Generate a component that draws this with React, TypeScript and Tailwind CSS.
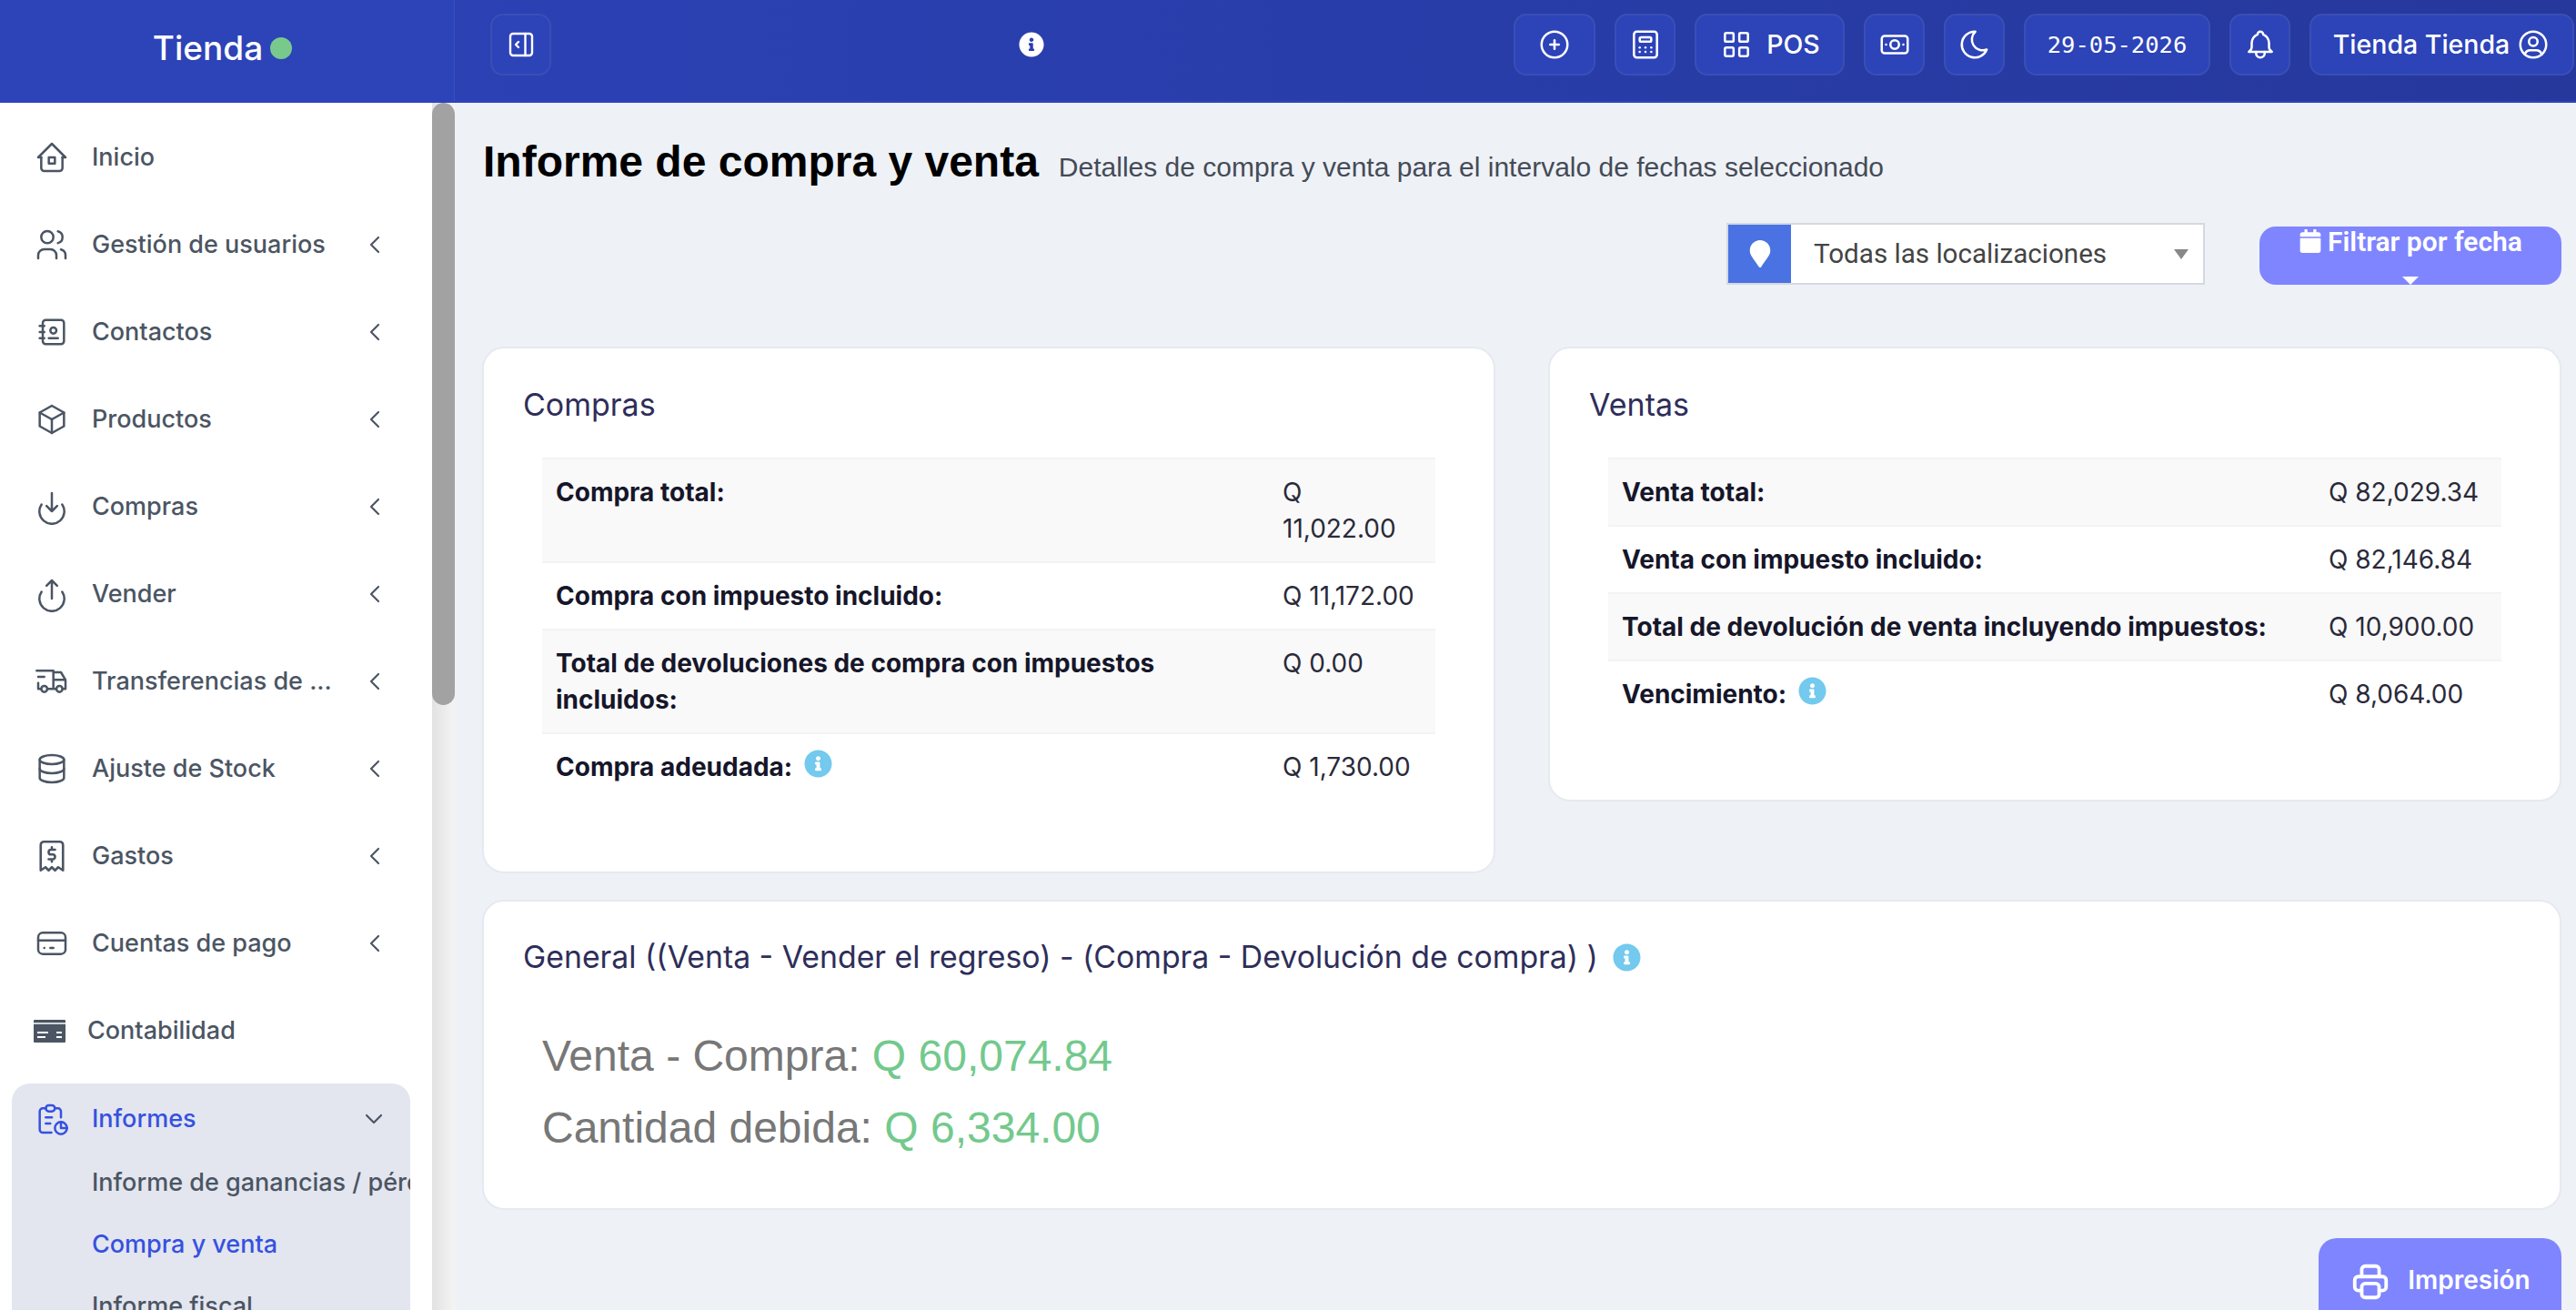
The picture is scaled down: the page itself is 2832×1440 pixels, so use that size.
import React from "react";
import { TbHome2, TbUsers, TbAddressBook, TbBox, TbChevronLeft, TbChevronDown, TbTruckDelivery, TbDatabase, TbReceipt2, TbCreditCard, TbReport, TbLayoutSidebarRightExpand, TbCirclePlus, TbCalculator, TbLayoutGrid, TbCashBanknote, TbMoon, TbBell, TbUserCircle, TbPrinter } from "react-icons/tb";
import { FaInfoCircle, FaMapMarker, FaCalendar } from "react-icons/fa";

function ArcArrow({ up }: { up?: boolean }) {
  return (
    <svg width="40" height="40" viewBox="0 0 24 24" fill="none" stroke="currentColor" strokeWidth="1.5" strokeLinecap="round" strokeLinejoin="round">
      <path d="M5.2 9.5a8.2 8.2 0 1 0 13.6 0" transform="translate(0 1)" />
      {up ? <path d="M12 15V3M8.5 6.5 12 3l3.5 3.5" /> : <path d="M12 3v12M8.5 11.5 12 15l3.5-3.5" />}
    </svg>
  );
}

const tb = { size: 40, strokeWidth: 1.5 };
const items: [string, React.ReactNode, boolean][] = [
  ["Inicio", <TbHome2 {...tb} />, false],
  ["Gestión de usuarios", <TbUsers {...tb} />, true],
  ["Contactos", <TbAddressBook {...tb} />, true],
  ["Productos", <TbBox {...tb} />, true],
  ["Compras", <ArcArrow />, true],
  ["Vender", <ArcArrow up />, true],
  ["Transferencias de ...", <TbTruckDelivery {...tb} />, true],
  ["Ajuste de Stock", <TbDatabase {...tb} />, true],
  ["Gastos", <TbReceipt2 size={42} strokeWidth={1.5} className="-mx-px" />, true],
  ["Cuentas de pago", <TbCreditCard {...tb} />, true],
];

function HBtn({ children, w }: { children: React.ReactNode; w: string }) {
  return <div className={`h-[68px] ${w} rounded-[14px] border-2 border-[#3a4fb5] bg-[#2d43b8] flex items-center justify-center gap-[14px] text-white`}>{children}</div>;
}

function Row({ label, value, alt, info, w }: { label: React.ReactNode; value: React.ReactNode; alt?: boolean; info?: boolean; w: string }) {
  return (
    <div className={`flex border-t-2 border-[#f3f3f5] ${alt ? "bg-[#f9f9f9]" : "bg-white"} py-[16px] pl-[15px] pr-4 text-[28px] leading-[40px]`}>
      <div className="flex-1 font-bold text-[#16162a] pr-4 self-start">
        {label}
        {info && <FaInfoCircle size={31} className="inline-block ml-[13px] align-[-2px] text-[#73c9ee]" />}
      </div>
      <div className={`text-[#2a2a3a] ${w}`}>{value}</div>
    </div>
  );
}

export default function App() {
  return (
    <div className="w-[2832px] h-[1440px] overflow-hidden flex flex-col bg-[#eef1f6] font-['Inter',sans-serif]">
      <header className="h-[113px] flex shrink-0 bg-[#2d43b8] border-b-2 border-[#2f45bd]">
        <div className="w-[500px] border-r border-[#3a4fc0] flex items-center justify-center gap-2 pb-[6px] pr-[10px] text-white text-[37px] font-medium">
          Tienda <span className="w-6 h-6 rounded-full bg-[#79c98d]" />
        </div>
        <div className="flex-1 flex items-start pt-[15px] pl-[39px] pr-[2px] bg-gradient-to-r from-[#2b41b4] to-[#26389c]">
          <HBtn w="w-[67px]"><TbLayoutSidebarRightExpand size={36} strokeWidth={1.6} /></HBtn>
          <div className="w-[542px] pl-[1px] h-[68px] flex items-center justify-end">
            <FaInfoCircle size={28} className="text-white" />
          </div>
          <div className="flex-1" />
          <div className="flex gap-[21px] text-[28.5px] font-medium">
            <HBtn w="w-[90px]"><TbCirclePlus size={38} strokeWidth={1.6} /></HBtn>
            <HBtn w="w-[67px]"><TbCalculator size={38} strokeWidth={1.6} /></HBtn>
            <HBtn w="w-[165px]"><TbLayoutGrid size={38} strokeWidth={1.6} /> POS</HBtn>
            <HBtn w="w-[67px]"><TbCashBanknote size={38} strokeWidth={1.6} /></HBtn>
            <HBtn w="w-[67px]"><TbMoon size={38} strokeWidth={1.6} /></HBtn>
            <HBtn w="w-[205px]"><span className="font-['DejaVu_Sans_Mono',monospace] font-normal text-[25.5px]">29-05-2026</span></HBtn>
            <HBtn w="w-[67px]"><TbBell size={38} strokeWidth={1.6} /></HBtn>
            <HBtn w="w-[291px]">Tienda Tienda <TbUserCircle size={38} strokeWidth={1.6} className="-ml-[7px]" /></HBtn>
          </div>
        </div>
      </header>
      <div className="flex flex-1 min-h-0">
        <aside className="w-[500px] h-full bg-white flex shrink-0 overflow-hidden">
          <div className="w-[475px] shrink-0 pt-[12px] text-[#4b5563] font-medium text-[27px]">
            {items.map(([name, icon, chev]) => (
              <div key={name} className="h-[96px] flex items-center pl-[37px] pr-[47px] gap-[24px]">
                {icon}
                <span className="flex-1 whitespace-nowrap">{name}</span>
                {chev && <TbChevronLeft size={32} strokeWidth={1.6} />}
              </div>
            ))}
            <div className="h-[96px] flex items-center pl-[37px] gap-[24px]">
              <svg width="35" height="25" viewBox="0 0 35 25"><rect width="35" height="25" rx="1" fill="#4b5563" /><path d="M0 4h35" stroke="#fff" strokeWidth="1.5" /><path d="M4 14h12M25 14h6M4 19h9M25 19h6" stroke="#fff" strokeWidth="2" /></svg>
              <span>Contabilidad</span>
            </div>
            <div className="mx-[13px] w-[438px] rounded-t-[20px] bg-[#e3e6ef] overflow-hidden h-[400px] mt-[10px]">
              <div className="h-[72px] mt-[3px] flex items-center pl-[24px] pr-[24px] gap-[24px] text-[#3651e0]">
                <TbReport {...tb} />
                <span className="flex-1">Informes</span>
                <TbChevronDown size={32} strokeWidth={1.6} className="text-[#4b5563]" />
              </div>
              <div className="pl-[88px] whitespace-nowrap h-[68px] flex items-center">Informe de ganancias / pérdidas</div>
              <div className="pl-[88px] h-[68px] flex items-center text-[#3651e0]">Compra y venta</div>
              <div className="pl-[88px] h-[68px] flex items-center">Informe fiscal</div>
            </div>
          </div>
          <div className="w-[25px] h-full bg-gradient-to-r from-[#e2e2e2] to-[#f4f4f4]">
            <div className="h-[662px] w-full rounded-full bg-[#a2a2a2]" />
          </div>
        </aside>
        <main className="flex-1 pl-[30px] pr-[16px] min-w-0 overflow-hidden">
          <div className="flex items-baseline gap-[22px] pt-[35px] pl-px">
            <h1 className="text-[48px] leading-[60px] font-bold text-black font-['Liberation_Sans',sans-serif]">Informe de compra y venta</h1>
            <span className="text-[30px] text-[#444b57] font-['Liberation_Sans',sans-serif]">Detalles de compra y venta para el intervalo de fechas seleccionado</span>
          </div>
          <div className="flex justify-end items-end gap-[60px] mt-[37px]">
            <div className="w-[526px] h-[68px] border-2 border-[#d5d8de] flex bg-white">
              <div className="w-[69px] bg-[#4a72e2] flex items-center justify-center"><FaMapMarker size={30} className="text-white" /></div>
              <div className="flex-1 flex items-center pl-[25px] text-[29.6px] text-[#444] font-['Roboto',sans-serif]">Todas las localizaciones</div>
              <span className="self-center mr-4 w-0 h-0 border-x-[8px] border-x-transparent border-t-[11px] border-t-[#888]" />
            </div>
            <div className="w-[332px] h-[64px] rounded-[18px] bg-[#7f85ff] text-white text-[30px] font-semibold relative flex justify-center">
              <span className="flex items-center gap-[6px] h-[32px] font-['Roboto',sans-serif]"><FaCalendar size={26} /> Filtrar por fecha</span>
              <span className="absolute bottom-0 left-1/2 -translate-x-1/2 w-0 h-0 border-x-[9px] border-x-transparent border-t-[9px] border-t-white" />
            </div>
          </div>
          <div className="flex gap-[58px] mt-[68px] items-start">
            <section className="w-[1114px] h-[579px] bg-white rounded-[24px] border-2 border-[#e6e9f0] px-[44px]">
              <h2 className="text-[34px] leading-[44px] text-[#2e2e5a] mt-[40px] mb-[36px] -ml-px">Compras</h2>
              <div className="mx-5">
                <Row alt w="w-[152px]" label="Compra total:" value={<>Q<br />11,022.00</>} />
                <Row w="w-[152px]" label="Compra con impuesto incluido:" value={<span className="whitespace-nowrap">Q 11,172.00</span>} />
                <Row alt w="w-[152px]" label="Total de devoluciones de compra con impuestos incluidos:" value="Q 0.00" />
                <Row info w="w-[152px]" label="Compra adeudada:" value={<span className="whitespace-nowrap">Q 1,730.00</span>} />
              </div>
            </section>
            <section className="flex-1 h-[500px] bg-white rounded-[24px] border-2 border-[#e6e9f0] px-[44px]">
              <h2 className="text-[34px] leading-[44px] text-[#2e2e5a] mt-[40px] mb-[36px] -ml-px">Ventas</h2>
              <div className="mx-5">
                <Row alt w="w-[174px]" label="Venta total:" value={<span className="whitespace-nowrap">Q 82,029.34</span>} />
                <Row w="w-[174px]" label="Venta con impuesto incluido:" value={<span className="whitespace-nowrap">Q 82,146.84</span>} />
                <Row alt w="w-[174px]" label="Total de devolución de venta incluyendo impuestos:" value={<span className="whitespace-nowrap">Q 10,900.00</span>} />
                <Row info w="w-[174px]" label="Vencimiento:" value={<span className="whitespace-nowrap">Q 8,064.00</span>} />
              </div>
            </section>
          </div>
          <section className="mt-[29px] h-[341px] bg-white rounded-[24px] border-2 border-[#e6e9f0] px-[44px]">
            <h2 className="text-[33.8px] leading-[44px] text-[#2e2e5a] mt-[39px] -ml-px flex items-center gap-4">General ((Venta - Vender el regreso) - (Compra - Devolución de compra) ) <FaInfoCircle size={31} className="text-[#73c9ee]" /></h2>
            <div className="mt-[47px] pl-5 text-[48px] leading-[79px] text-[#777] font-['Liberation_Sans',sans-serif]">
              <div>Venta - Compra: <span className="text-[#73c98d]">Q 60,074.84</span></div>
              <div>Cantidad debida: <span className="text-[#73c98d]">Q 6,334.00</span></div>
            </div>
          </section>
          <div className="flex justify-end mt-[31px]">
            <div className="w-[267px] h-[100px] rounded-[20px] bg-[#7f85ff] text-white text-[28px] font-semibold flex items-start pt-[25px] justify-center gap-[18px]"><TbPrinter size={46} strokeWidth={2} /> Impresión</div>
          </div>
        </main>
      </div>
    </div>
  );
}
